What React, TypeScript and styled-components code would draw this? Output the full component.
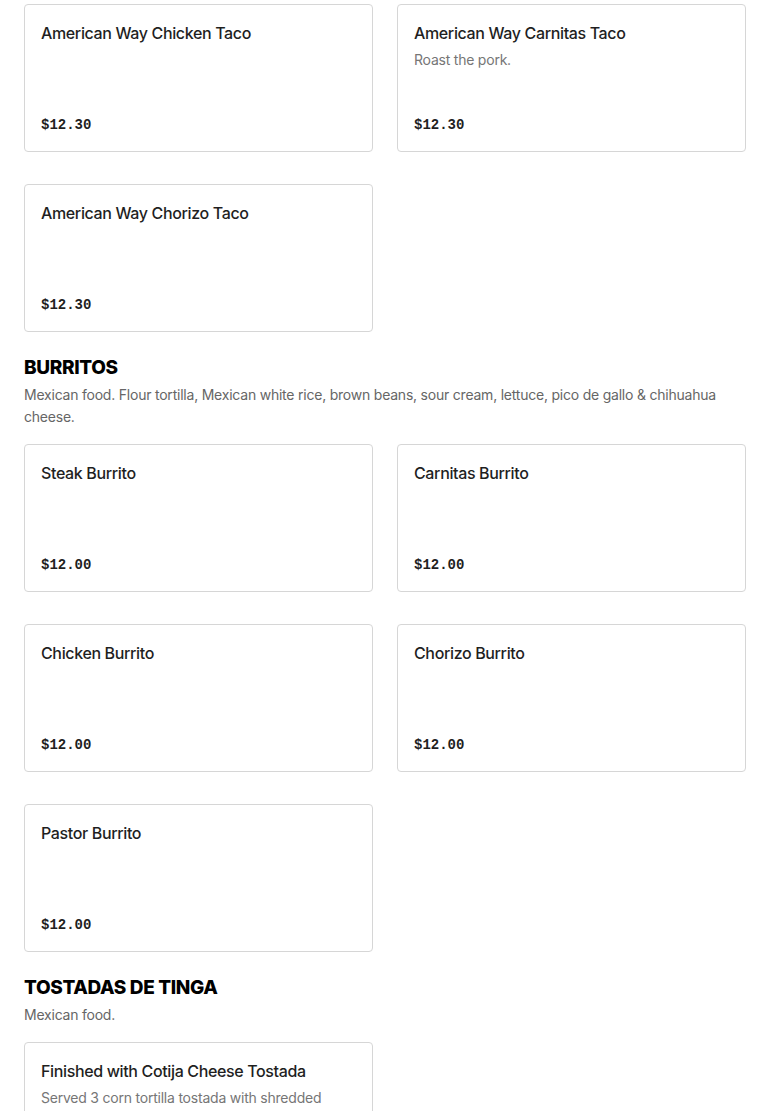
import React from 'react'
import styled, { createGlobalStyle } from 'styled-components'

const GlobalStyle = createGlobalStyle`
  body {
    margin: 0;
    background: #fff;
    font-family: Inter, "Liberation Sans", sans-serif;
    color: #1f1f1f;
  }
`

type Item = { name: string; description?: string; price: string }
type Section = { title?: string; description?: string; items: Item[] }

const sections: Section[] = [
  {
    items: [
      { name: 'American Way Chicken Taco', price: '$12.30' },
      { name: 'American Way Carnitas Taco', description: 'Roast the pork.', price: '$12.30' },
      { name: 'American Way Chorizo Taco', price: '$12.30' },
    ],
  },
  {
    title: 'BURRITOS',
    description:
      'Mexican food. Flour tortilla, Mexican white rice, brown beans, sour cream, lettuce, pico de gallo & chihuahua cheese.',
    items: [
      { name: 'Steak Burrito', price: '$12.00' },
      { name: 'Carnitas Burrito', price: '$12.00' },
      { name: 'Chicken Burrito', price: '$12.00' },
      { name: 'Chorizo Burrito', price: '$12.00' },
      { name: 'Pastor Burrito', price: '$12.00' },
    ],
  },
  {
    title: 'TOSTADAS DE TINGA',
    description: 'Mexican food.',
    items: [
      {
        name: 'Finished with Cotija Cheese Tostada',
        description:
          'Served 3 corn tortilla tostada with shredded chicken tinga, lettuce, sour cream and cotija cheese.',
        price: '$12.00',
      },
    ],
  },
]

const Page = styled.div`
  padding: 4px 24px 40px;
  display: flex;
  flex-direction: column;
  gap: 24px;
`

const SectionBlock = styled.section`
  display: flex;
  flex-direction: column;
`

const SectionTitle = styled.h2`
  margin: 0 0 4px;
  font-size: 19px;
  line-height: 24px;
  font-weight: 800;
  color: #000;
  letter-spacing: -0.35px;
`

const SectionDesc = styled.p`
  margin: 0 0 16px;
  font-size: 14px;
  line-height: 22px;
  color: #666;
  letter-spacing: -0.22px;
`

const Grid = styled.div`
  display: grid;
  grid-template-columns: 1fr 1fr;
  column-gap: 24px;
  row-gap: 32px;
`

const Card = styled.div`
  box-sizing: border-box;
  min-height: 148px;
  padding: 16px;
  border: 1px solid #d6d6d6;
  border-radius: 4px;
  display: flex;
  flex-direction: column;
  justify-content: space-between;
  background: #fff;
`

const Name = styled.div`
  font-size: 16px;
  line-height: 24px;
  font-weight: 500;
  color: #1f1f1f;
  letter-spacing: -0.36px;
`

const Desc = styled.div`
  margin-top: 5px;
  font-size: 14px;
  line-height: 20px;
  color: #767676;
  letter-spacing: -0.22px;
`

const Price = styled.div`
  margin-top: 16px;
  font-family: "Liberation Mono", "DejaVu Sans Mono", monospace;
  font-size: 14px;
  line-height: 20px;
  font-weight: 700;
  color: #1f1f1f;
`

const MenuCard = ({ item }: { item: Item }) => (
  <Card>
    <div>
      <Name>{item.name}</Name>
      {item.description && <Desc>{item.description}</Desc>}
    </div>
    <Price>{item.price}</Price>
  </Card>
)

export default function App() {
  return (
    <>
      <GlobalStyle />
      <Page>
        {sections.map((s, i) => (
          <SectionBlock key={i}>
            {s.title && <SectionTitle>{s.title}</SectionTitle>}
            {s.description && <SectionDesc>{s.description}</SectionDesc>}
            <Grid>
              {s.items.map((it) => (
                <MenuCard key={it.name} item={it} />
              ))}
            </Grid>
          </SectionBlock>
        ))}
      </Page>
    </>
  )
}
